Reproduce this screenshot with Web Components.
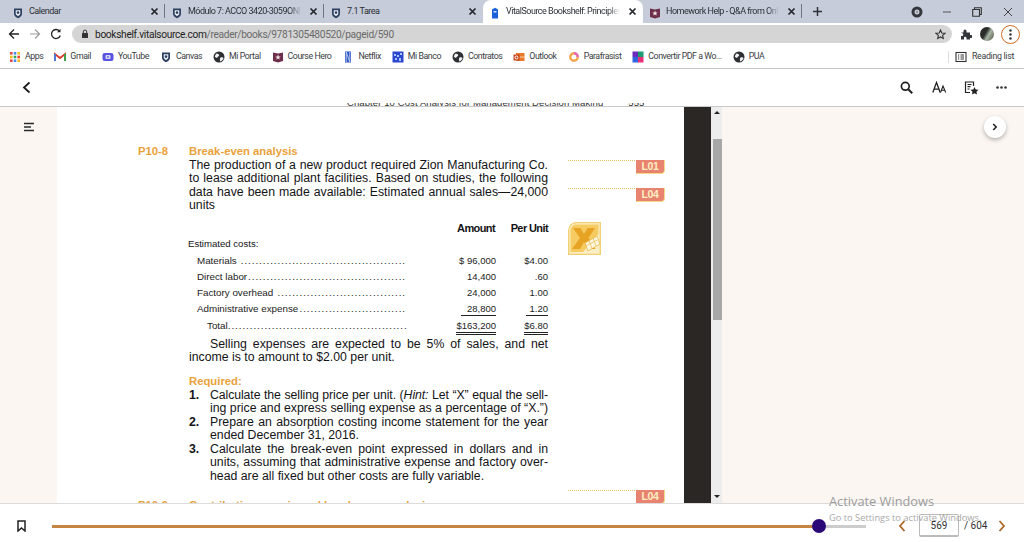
<!DOCTYPE html>
<html lang="en">
<head>
<meta charset="utf-8">
<title>VitalSource Bookshelf</title>
<style>
  html, body { margin: 0; height: 100%; overflow: hidden; background: #fff; }
</style>
</head>
<body>
<reader-app>
  <tab-strip slot="tabs">
    <browser-tab icon="shield" label="Calendar"></browser-tab>
    <browser-tab icon="shield" label="Módulo 7: ACCO 3420-3059ONL" fade></browser-tab>
    <browser-tab icon="shield" label="7.1 Tarea"></browser-tab>
    <browser-tab icon="vital" label="VitalSource Bookshelf: Principles" active fade></browser-tab>
    <browser-tab icon="hero" label="Homework Help - Q&amp;A from Onl" fade></browser-tab>
  </tab-strip>
  <url-bar slot="url"></url-bar>
  <bookmark-bar slot="bookmarks">
    <bookmark-item icon="apps" label="Apps"></bookmark-item>
    <bookmark-item icon="gmail" label="Gmail"></bookmark-item>
    <bookmark-item icon="youtube" label="YouTube"></bookmark-item>
    <bookmark-item icon="shield" label="Canvas"></bookmark-item>
    <bookmark-item icon="globe" label="Mi Portal"></bookmark-item>
    <bookmark-item icon="hero" label="Course Hero"></bookmark-item>
    <bookmark-item icon="netflix" label="Netflix"></bookmark-item>
    <bookmark-item icon="banco" label="Mi Banco"></bookmark-item>
    <bookmark-item icon="globe" label="Contratos"></bookmark-item>
    <bookmark-item icon="outlook" label="Outlook"></bookmark-item>
    <bookmark-item icon="para" label="Parafrasist"></bookmark-item>
    <bookmark-item icon="pdf" label="Convertir PDF a Wo..."></bookmark-item>
    <bookmark-item icon="globe" label="PUA"></bookmark-item>
  </bookmark-bar>
  <reader-header slot="header"></reader-header>
  <book-view slot="main">
    <book-page>
      <cost-row label="Materials" dots="45" amount="$ 96,000" unit="$4.00"></cost-row>
      <cost-row label="Direct labor" dots="43" amount="14,400" unit=".60"></cost-row>
      <cost-row label="Factory overhead" dots="35" amount="24,000" unit="1.00"></cost-row>
      <cost-row label="Administrative expense" dots="29" amount="28,800" unit="1.20" rule="single"></cost-row>
      <cost-row label="Total" dots="49" amount="$163,200" unit="$6.80" rule="double" indent></cost-row>
    </book-page>
  </book-view>
  <reader-footer slot="footer"></reader-footer>
</reader-app>

<script>
const ICONS = {
  shield: `<path d="M2 1.500h8v5.200c0 2.400-2 3.700-4 4.600-2-.9-4-2.200-4-4.600z" fill="#2d3f5e"/><path d="M3.700 3.200h4.600v3.400c0 1.200-1.200 2-2.300 2.600-1.100-.6-2.300-1.400-2.300-2.600z" fill="#e9edf3"/><circle cx="6" cy="5.600" r="1.300" fill="#2d3f5e"/>`,
  vital: `<path d="M3 2.500 6 .8l3 1.700v9H3z" fill="#1b5fd9"/><rect x="4.500" y="4" width="3" height="1.500" fill="#cfe0fb"/>`,
  hero: `<path d="M1 1.500 6 2.500l5-1v8.500L6 11.500 1 10z" fill="#6d2f4c"/><path d="m6 3.600.8 1.800 1.900.1-1.500 1.200.5 1.900L6 7.500l-1.700 1.100.5-1.900-1.500-1.200 1.900-.1z" fill="#f2e4e4"/>`,
  apps: [0, 1, 2].flatMap(r => [0, 1, 2].map(c => `<rect x="${1 + c * 3.7}" y="${1 + r * 3.7}" width="2.600" height="2.600" fill="${['#e8453c', '#4a8af4', '#f6bb18', '#34a853'][(r * 2 + c) % 4]}"/>`)).join(''),
  gmail: `<path d="M1 10V3l5 4 5-4v7" fill="none" stroke="#d8392b" stroke-width="1.800"/><path d="M1 10V3" stroke="#3f7ee8" stroke-width="1.800"/><path d="M11 10V3" stroke="#2fa84f" stroke-width="1.800"/>`,
  youtube: `<rect x="0.500" y="2" width="11" height="8" rx="2.200" fill="#5a55e0"/><rect x="3.500" y="4" width="5" height="4" rx="1" fill="#d7d8f8"/><path d="M5.300 4.800v2.400L7.300 6z" fill="#5a55e0"/>`,
  globe: `<circle cx="6" cy="6" r="5.500" fill="#2c2f33"/><path d="M3 2.800c1.600-.5 3 .2 3.200 1.200.2 1.100-1.400 1.300-1.700 2.300C4 7.400 2.600 6.600 1.800 5.500zM7.500 6.500c1.300-.4 2.600 0 3 .8-.6 1.700-1.900 2.800-3.100 3.200-.6-1.200-.8-2.700.1-4z" fill="#f2f2f2"/>`,
  netflix: `<rect x="3" y="0.500" width="6" height="11" fill="#2f56c6"/><path d="M4.200 1v10M7.800 1v10M4.200 1l3.600 10" stroke="#c7d2ee" stroke-width=".9" fill="none"/>`,
  banco: `<rect x="0.500" y="0.500" width="11" height="11" fill="#2d46cf"/><path d="M2 3h2v2H2zm3 1h2v2H5zm3-2h2v2H8zM3 7h2v2H3zm4 0h2v3H7z" fill="#a9c4f8"/>`,
  outlook: `<rect x="3" y="2" width="8.500" height="8" fill="#e8792c"/><rect x="0.500" y="3.500" width="6" height="6" fill="#c8481b"/><circle cx="3.500" cy="6.500" r="1.500" fill="none" stroke="#fff"/><path d="M7 6h4.500" stroke="#f8d2a8"/>`,
  para: `<circle cx="6" cy="6" r="3.700" fill="none" stroke="#f2a54a" stroke-width="2.400"/><path d="M6 2.300a3.700 3.700 0 0 1 3.700 3.700" fill="none" stroke="#e668b8" stroke-width="2.400"/>`,
  pdf: `<rect x="0.500" y="0.500" width="5.500" height="5.500" fill="#6a2bbd"/><rect x="6" y="0.500" width="5.500" height="5.500" fill="#1c9c6f"/><rect x="0.500" y="6" width="5.500" height="5.500" fill="#2e64e0"/><rect x="6" y="6" width="5.500" height="5.500" fill="#ea2e78"/>`,
  reading: `<rect x="1" y="1.500" width="10" height="9" fill="none" stroke="#333" stroke-width="1.100"/><path d="M3 4h1.200M5.500 4H9M3 6h1.200M5.500 6H9M3 8h1.200M5.500 8H9" stroke="#333"/>`
};

const faviconSvg = (name) => `<svg width="12" height="12" viewBox="0 0 12 12" aria-hidden="true">${ICONS[name] || ''}</svg>`;

class ShadowBase extends HTMLElement {
  constructor() {
    super();
    this.attachShadow({ mode: 'open' });
  }

  connectedCallback() {
    this.shadowRoot.innerHTML = this.render();
  }
}

class ReaderApp extends ShadowBase {
  render() {
    return `<style>
      :host { display: grid; grid-template-rows: 23px 22px 23px 1px 34px 400px 39px; width: 1024px; height: 542px; overflow: hidden; }
      .rule { background: #c4c4c4; }
    </style>
    <slot name="tabs"></slot>
    <slot name="url"></slot>
    <slot name="bookmarks"></slot>
    <div class="rule"></div>
    <slot name="header"></slot>
    <slot name="main"></slot>
    <slot name="footer"></slot>`;
  }
}

class TabStrip extends ShadowBase {
  render() {
    return `<style>
      :host { display: flex; align-items: stretch; padding-left: 6px; background: #c6ccd9; color: #2b2f36; }
      .plus { width: 30px; display: flex; align-items: center; justify-content: center; }
      .caption { margin-left: auto; display: flex; align-items: center; }
      .caption span { width: 30px; display: flex; justify-content: center; }
      .caption .close { width: 31px; padding-right: 1px; }
    </style>
    <slot></slot>
    <div class="plus"><svg width="11" height="11" viewBox="0 0 11 11"><path d="M5.500 1v9M1 5.500h9" stroke="#30343a" stroke-width="1.500"/></svg></div>
    <div class="caption">
      <span><svg width="12" height="12" viewBox="0 0 12 12"><circle cx="6" cy="6" r="4" fill="none" stroke="#34373d" stroke-width="3"/><circle cx="6" cy="6" r="1" fill="#888"/></svg></span>
      <span><svg width="10" height="10" viewBox="0 0 10 10"><path d="M1 5h8" stroke="#555" stroke-width="1"/></svg></span>
      <span><svg width="10" height="10" viewBox="0 0 10 10"><path d="M2.500 2.500V.7h6.800v6.800H7.500M.7 2.500h6.800v6.800H.7z" fill="none" stroke="#333" stroke-width="1.100"/></svg></span>
      <span class="close"><svg width="10" height="10" viewBox="0 0 10 10"><path d="m1 1 8 8M9 1 1 9" stroke="#444" stroke-width="1"/></svg></span>
    </div>`;
  }
}

class BrowserTab extends ShadowBase {
  render() {
    const label = this.getAttribute('label');
    return `<style>
      :host { display: flex; align-items: center; gap: 5px; box-sizing: border-box; width: 159px; padding: 0 4px 0 6px; position: relative;
        font: 9px/23px Roboto, sans-serif; letter-spacing: -.5px; color: #2b2f36; }
      :host([active]) { background: #fff; border-radius: 8px 8px 0 0; width: 160px; }
      :host(:not([active]):not(:nth-child(3)))::after { content: ""; position: absolute; right: 0; top: 4px; bottom: 5px; width: 1px; background: #6f7480; }
      .fav { margin-top: -1px; flex: none; display: block; height: 12px; }
      .text { flex: 1; min-width: 0; overflow: hidden; white-space: nowrap; }
      :host([fade]) .text { -webkit-mask-image: linear-gradient(to right, #000 90%, transparent); mask-image: linear-gradient(to right, #000 90%, transparent); }
      svg.x { flex: none; margin: 0 2px 0 3px; }
    </style>
    <span class="fav">${faviconSvg(this.getAttribute('icon'))}</span>
    <span class="text">${label.replace('&', '&amp;')}</span>
    <svg class="x" width="9" height="9" viewBox="0 0 9 9"><path d="m1.500 1.500 6 6m0-6-6 6" stroke="#23262b" stroke-width="1.700"/></svg>`;
  }
}

class UrlBar extends ShadowBase {
  render() {
    return `<style>
      :host { display: flex; align-items: center; background: #fff; font: 10.200px Roboto, sans-serif; letter-spacing: -.33px; color: #6a6a6a; }
      .nav { display: flex; width: 72px; box-sizing: border-box; align-items: center; padding-left: 8px; gap: 9px; }
      .pill { width: 880px; height: 18px; border-radius: 9px; background: #d5d5d5; display: flex; align-items: center; padding: 0 6px 0 9px; box-sizing: border-box; gap: 6px; }
      .url { flex: 1; white-space: nowrap; }
      .url b { font-weight: 400; color: #1e1e1e; }
      .tools { flex: 1; display: flex; align-items: center; padding-left: 8px; gap: 8px; }
      .avatar { width: 14px; height: 14px; border-radius: 50%; background: linear-gradient(120deg, #2a2c2a 40%, #a7b7a6 60%, #4e4a3a); }
      .menu { width: 17px; height: 17px; border: 1.500px solid #d2691e; border-radius: 50%; display: flex; align-items: center; justify-content: center; margin-left: -1px; }
    </style>
    <div class="nav">
      <svg width="12" height="12" viewBox="0 0 12 12"><path d="M11 6H1.500M6 1.500 1.500 6 6 10.500" fill="none" stroke="#222" stroke-width="1.300"/></svg>
      <svg width="12" height="12" viewBox="0 0 12 12"><path d="M1 6h9.500M6 1.500 10.500 6 6 10.500" fill="none" stroke="#9a9a9a" stroke-width="1.200"/></svg>
      <svg width="12" height="12" viewBox="0 0 12 12"><path d="M10.300 7.500A4.500 4.500 0 1 1 9.400 3" fill="none" stroke="#222" stroke-width="1.300"/><path d="M10.500.8v3.400H7.100z" fill="#222"/></svg>
    </div>
    <div class="pill">
      <svg width="8" height="10" viewBox="0 0 8 10"><rect x="1" y="4" width="6" height="5" rx=".6" fill="#333"/><path d="M2.300 4V2.800a1.700 1.700 0 0 1 3.400 0V4" fill="none" stroke="#333"/></svg>
      <span class="url"><b>bookshelf.vitalsource.com</b>/reader/books/9781305480520/pageid/590</span>
      <svg width="11" height="11" viewBox="0 0 11 11"><path d="m5.500 1 1.300 3 3.200.3-2.400 2.100.7 3.100-2.800-1.600-2.800 1.600.7-3.100L1 4.300 4.200 4z" fill="none" stroke="#333" stroke-width="1.100"/></svg>
    </div>
    <div class="tools">
      <svg width="12" height="12" viewBox="0 0 12 12"><path d="M1 4.500h2.500V3a1.500 1.500 0 0 1 3 0v1.500H10V7h1a1.500 1.500 0 0 1 0 3h-1v1.500H6.500V10a1.200 1.200 0 0 0-2.500 0v1.500H1V8h.8a1.500 1.500 0 0 0 0-3z" fill="#33373c"/></svg>
      <span class="avatar"></span>
      <span class="menu"><svg width="3" height="11" viewBox="0 0 3 11"><circle cx="1.500" cy="1.500" r="1.200" fill="#333"/><circle cx="1.500" cy="5.500" r="1.200" fill="#333"/><circle cx="1.500" cy="9.500" r="1.200" fill="#333"/></svg></span>
    </div>`;
  }
}

class BookmarkBar extends ShadowBase {
  render() {
    return `<style>
      :host { display: flex; align-items: center; gap: 11px; padding-left: 9px; background: #fff; }
      .reading { margin-left: auto; display: flex; align-items: center; gap: 5px; padding: 0 10px 0 6px; border-left: 1px solid #ddd;
        font: 8.800px/11px Roboto, sans-serif; letter-spacing: -.3px; color: #3a3d42; }
    </style>
    <slot></slot>
    <div class="reading">${faviconSvg('reading')}<span>Reading list</span></div>`;
  }
}

class BookmarkItem extends ShadowBase {
  render() {
    return `<style>
      :host { display: flex; align-items: center; gap: 4px; font: 8.800px/23px Roboto, sans-serif; letter-spacing: -.45px; color: #3a3d42; white-space: nowrap; }
      svg { display: block; }
    </style>
    ${faviconSvg(this.getAttribute('icon'))}<span>${this.getAttribute('label')}</span>`;
  }
}

class ReaderHeader extends ShadowBase {
  render() {
    return `<style>
      :host { display: flex; align-items: center; padding: 3px 17px 0 22px; background: #fff; gap: 17px; }
      .back { margin-right: auto; display: block; }
      svg { display: block; }
      .search { margin-right: 2px; }
    </style>
    <svg class="back" width="9" height="13" viewBox="0 0 9 13"><path d="M7.500 1.500 2 6.500l5.500 5" fill="none" stroke="#1c1c1c" stroke-width="1.800"/></svg>
    <svg class="search" width="13" height="13" viewBox="0 0 13 13"><circle cx="5.300" cy="5.300" r="3.900" fill="none" stroke="#222" stroke-width="1.700"/><path d="m8.200 8.200 4 4" stroke="#222" stroke-width="2"/></svg>
    <svg width="15" height="13" viewBox="0 0 15 13"><path d="m.8 11.500 3.700-10 3.700 10M2 8.200h5" fill="none" stroke="#222" stroke-width="1.300"/><path d="m8.500 11.500 2.500-6.500 2.700 6.500M9.500 9.300h3.200" fill="none" stroke="#222" stroke-width="1.100"/></svg>
    <svg width="15" height="14" viewBox="0 0 15 14"><path d="M6 11.500H1.500V1h8v4M3.500 3.500h4M3.500 5.700h3M3.500 8h2" fill="none" stroke="#222" stroke-width="1.200"/><path d="m10.500 6 1.200 2.500 2.800.3-2 1.900.5 2.800-2.500-1.300-2.500 1.300.5-2.800-2-1.900 2.800-.3z" fill="#222"/></svg>
    <svg width="11" height="3" viewBox="0 0 11 3"><circle cx="1.500" cy="1.500" r="1.300" fill="#333"/><circle cx="5.500" cy="1.500" r="1.300" fill="#333"/><circle cx="9.500" cy="1.500" r="1.300" fill="#333"/></svg>`;
  }
}

class BookView extends ShadowBase {
  render() {
    const beige = 'linear-gradient(#fff 4px, #fbf6f2 4px)';
    return `<style>
      :host { display: grid; grid-template-columns: 57px 627px 27px 11px 1fr; height: 400px; position: relative; overflow: hidden; }
      .rule { position: absolute; left: 0; right: 0; top: 3px; height: 1px; background: #c9c9c9; }
      .side { background: ${beige}; }
      .left { display: flex; justify-content: center; padding-top: 19px; box-sizing: border-box; }
      .gutter { background: linear-gradient(#fff 4px, #2b2724 4px); }
      .scroll { background: linear-gradient(#fff 4px, #ededed 4px); display: flex; flex-direction: column; align-items: center; padding-top: 7px; box-sizing: border-box; }
      .up { width: 0; height: 0; border: 3px solid transparent; border-top: 0; border-bottom: 3px solid #222; margin-top: 1px; }
      .thumb { width: 9px; height: 181px; margin: 25px 0 0 1px; background: #a8a8a8; }
      .down { width: 0; height: 0; border: 3px solid transparent; border-bottom: 0; border-top: 3px solid #222; margin-top: auto; margin-bottom: 5px; }
      .right { display: flex; justify-content: flex-end; padding: 13px 18px 0 0; box-sizing: border-box; }
      .next { width: 22px; height: 22px; border-radius: 50%; background: #fff; box-shadow: 0 2px 4px rgba(0,0,0,.28); display: flex; align-items: center; justify-content: center; }
    </style>
    <div class="side left"><svg width="10" height="10" viewBox="0 0 10 10"><path d="M0 1.500h10M0 5h7M0 8.500h10" stroke="#2a2a2a" stroke-width="1.500"/></svg></div>
    <slot></slot>
    <div class="gutter"></div>
    <div class="scroll"><span class="up"></span><span class="thumb"></span><span class="down"></span></div>
    <div class="side right"><span class="next"><svg width="6" height="8" viewBox="0 0 6 8"><path d="m1.200 1 3 3-3 3" fill="none" stroke="#222" stroke-width="1.600"/></svg></span></div>
    <div class="rule"></div>`;
  }
}

class BookPage extends ShadowBase {
  render() {
    const just = (t, cls = '') => `<div class="j ${cls}">${t}</div>`;
    return `<style>
      :host { display: block; background: #fff; overflow: hidden; color: #141416; font-family: "Liberation Sans", Arial, sans-serif; }
      .head { height: 4px; overflow: hidden; display: flex; align-items: flex-end; padding-left: 290px;
        font: 9.500px/8px "Liberation Sans", sans-serif; letter-spacing: .1px; color: #333; white-space: nowrap; }
      .head span { margin-left: 25px; }
      .columns { display: flex; padding-left: 81px; gap: 20px; }
      .text { width: 410px; padding-top: 38px; flex: none; }
      .notes { width: 97px; padding-top: 53px; flex: none; }
      .problem { display: grid; grid-template-columns: 51px 359px; font-size: 12.300px; line-height: 13.600px; }
      .num, .title { font-weight: 700; color: #e9a23b; font-size: 11.300px; }
      .j { text-align: justify; text-align-last: justify; }
      .tight { letter-spacing: -.1px; white-space: nowrap; }
      .table { margin-top: 9px; margin-left: 50px; }
      .cols { display: grid; grid-template-columns: 307px 53px; text-align: right; font: 700 11px/13px "Liberation Sans", sans-serif; letter-spacing: -.6px; }
      .est { margin-top: 1.300px; font-size: 9.600px; line-height: 16.300px; }
      .after { margin-top: 3.700px; margin-left: 51px; font-size: 12.300px; line-height: 13.600px; }
      .after .first { padding-left: 21px; }
      .required { margin-top: 10px; margin-left: 51px; font-weight: 700; font-size: 11.300px; line-height: 13.600px; color: #e9a23b; }
      ol { list-style: none; margin: 0 0 0 51px; padding: 0; font-size: 12.300px; line-height: 13.600px; }
      li { display: grid; grid-template-columns: 21px 338px; }
      li > b { grid-row: 1 / 4; }
      .next { margin-top: 15px; display: grid; grid-template-columns: 51px 359px; font-size: 11.300px; line-height: 13.600px; font-weight: 700; color: #e9a23b; }
      .excel { display: block; margin-top: 20px; }
      .last { margin-top: 235px; }
    </style>
    <div class="head">Chapter 10 Cost Analysis for Management Decision Making<span>555</span></div>
    <div class="columns">
      <div class="text">
        <div class="problem">
          <div class="num">P10-8</div>
          <div>
            <div class="title">Break-even analysis</div>
            ${just('The production of a new product required Zion Manufacturing Co.')}
            ${just('to lease additional plant facilities. Based on studies, the following')}
            ${just('data have been made available: Estimated annual sales—24,000')}
            <div>units</div>
          </div>
        </div>
        <div class="table">
          <div class="cols"><span>Amount</span><span>Per Unit</span></div>
          <div class="est">Estimated costs:</div>
          <slot></slot>
        </div>
        <div class="after">
          <div class="j first">Selling expenses are expected to be 5% of sales, and net</div>
          <div>income is to amount to $2.00 per unit.</div>
        </div>
        <div class="required">Required:</div>
        <ol>
          <li><b>1.</b><div>
            ${just('Calculate the selling price per unit. (<i>Hint:</i> Let “X” equal the sell-', 'tight')}
            ${just('ing price and express selling expense as a percentage of “X.”)')}
          </div></li>
          <li><b>2.</b><div>
            ${just('Prepare an absorption costing income statement for the year')}
            <div>ended December 31, 2016.</div>
          </div></li>
          <li><b>3.</b><div>
            ${just('Calculate the break-even point expressed in dollars and in')}
            ${just('units, assuming that administrative expense and factory over-')}
            <div>head are all fixed but other costs are fully variable.</div>
          </div></li>
        </ol>
        <div class="next"><span>P10-9</span><span>Contribution margin and break-even analysis</span></div>
      </div>
      <div class="notes">
        <lo-tag code="L01"></lo-tag>
        <lo-tag code="L04" style="margin-top:14px"></lo-tag>
        <svg class="excel" width="33" height="33" viewBox="0 0 33 33">
          <path d="M9 .700h23.300v31.600H.700V9C.700 4 4 .700 9 .700z" fill="#fbeec4" stroke="#f0cf6e" stroke-width="1.300"/>
          <path d="M9 2.500h21.500V12L15 30H2.500V9C2.500 5 5 2.500 9 2.500z" fill="#f5cb62"/>
          <path d="M5 6h7.500l3.500 6 3.500-6H27l-6.500 10 7 11H20l-4-7-4 7H4l8-11z" fill="#e7a324"/>
          <path d="m17 21 12-7 3 8-12 7z" fill="#fdf6dd" stroke="#e6b23c" stroke-width=".7"/>
          <path d="m21 18.500 3 8m1-10.500 3 8m-9.500-.5 11-5.500" stroke="#e6b23c" stroke-width=".6"/>
        </svg>
        <lo-tag class="last" code="L04"></lo-tag>
      </div>
    </div>`;
  }
}

class CostRow extends ShadowBase {
  render() {
    const rule = this.getAttribute('rule') || 'none';
    const dots = '.'.repeat(Number(this.getAttribute('dots')));
    return `<style>
      :host { display: grid; grid-template-columns: 209px 90px 52px; margin-left: 9px; font: 9.800px/16.300px "Liberation Sans", sans-serif; height: 16.300px; color: #1c1c1c; }
      .lead { display: flex; justify-content: space-between; white-space: nowrap; }
      :host([indent]) .lead { padding-left: 10px; }
      .dots { letter-spacing: .95px; color: #222; }
      .num { text-align: right; font-size: 9.500px; }
      .num span { display: inline-block; line-height: 12px; }
      .single span { border-bottom: 1px solid #222; }
      .double span { border-bottom: 3px double #222; }
      .single .a { padding-left: 6px; }
      .single .u { padding-left: 4px; }
    </style>
    <div class="lead"><span>${this.getAttribute('label')}</span><span class="dots">${dots}</span></div>
    <div class="num ${rule}"><span class="a">${this.getAttribute('amount')}</span></div>
    <div class="num ${rule}"><span class="u">${this.getAttribute('unit')}</span></div>`;
  }
}

class LoTag extends ShadowBase {
  render() {
    return `<style>
      :host { display: flex; justify-content: flex-end; height: 14px; box-sizing: border-box; border-top: 1px dotted #e6c45c; }
      .tag { width: 29px; height: 14px; margin-top: -1px; box-sizing: border-box; background: #e8836f; border-right: 1px solid #f5d888; border-bottom: 1px solid #f5d888; border-radius: 0 0 4px 0;
        font: 700 10.500px/13px "Liberation Sans", sans-serif; letter-spacing: -.3px; color: #fdeec4; text-align: center; }
    </style>
    <span class="tag">${this.getAttribute('code')}</span>`;
  }
}

class ReaderFooter extends ShadowBase {
  render() {
    return `<style>
      :host { display: flex; align-items: center; box-sizing: border-box; border-top: 1px solid #dcdcdc; padding: 5px 0 0 17px; background: #fff; position: relative; }
      svg { display: block; flex: none; }
      .track { width: 814px; height: 3px; margin: 2px 0 0 26px; position: relative; flex: none; background: linear-gradient(to right, #c68643 767px, #cccccc 767px); }
      .thumb { position: absolute; left: 760px; top: -6px; width: 14px; height: 14px; border-radius: 50%; background: #2b0a78; }
      .pager { display: flex; align-items: center; margin-left: 32px; font: 10px Roboto, sans-serif; color: #333; }
      .page { width: 40px; height: 23px; box-sizing: border-box; margin: 0 5px 0 13px; border: 1px solid #bbb; border-bottom-width: 2px; border-radius: 2px; display: flex; align-items: center; justify-content: center; }
      .pager .to { margin-right: 11px; }
      .watermark { position: absolute; left: 829px; top: -11px; font: 12.800px/16px "Open Sans", sans-serif; color: #9c9c9c; white-space: nowrap; pointer-events: none; }
      .watermark small { display: block; font-size: 9.300px; line-height: 13px; margin-top: 2px; color: #a8a8a8; }
    </style>
    <svg width="9" height="12" viewBox="0 0 9 12"><path d="M1 1h7v10L4.500 8 1 11z" fill="none" stroke="#222" stroke-width="1.500"/></svg>
    <div class="track"><span class="thumb"></span></div>
    <div class="pager">
      <svg width="8" height="12" viewBox="0 0 8 12"><path d="M6.500 1 2 6l4.500 5" fill="none" stroke="#a8621e" stroke-width="1.700"/></svg>
      <span class="page">569</span>
      <span class="to">/ 604</span>
      <svg width="8" height="12" viewBox="0 0 8 12"><path d="m1.500 1 4.500 5-4.500 5" fill="none" stroke="#a8621e" stroke-width="1.700"/></svg>
    </div>
    <div class="watermark">Activate Windows<small>Go to Settings to activate Windows.</small></div>`;
  }
}

customElements.define('reader-app', ReaderApp);
customElements.define('tab-strip', TabStrip);
customElements.define('browser-tab', BrowserTab);
customElements.define('url-bar', UrlBar);
customElements.define('bookmark-bar', BookmarkBar);
customElements.define('bookmark-item', BookmarkItem);
customElements.define('reader-header', ReaderHeader);
customElements.define('book-view', BookView);
customElements.define('book-page', BookPage);
customElements.define('cost-row', CostRow);
customElements.define('lo-tag', LoTag);
customElements.define('reader-footer', ReaderFooter);
</script>
</body>
</html>
